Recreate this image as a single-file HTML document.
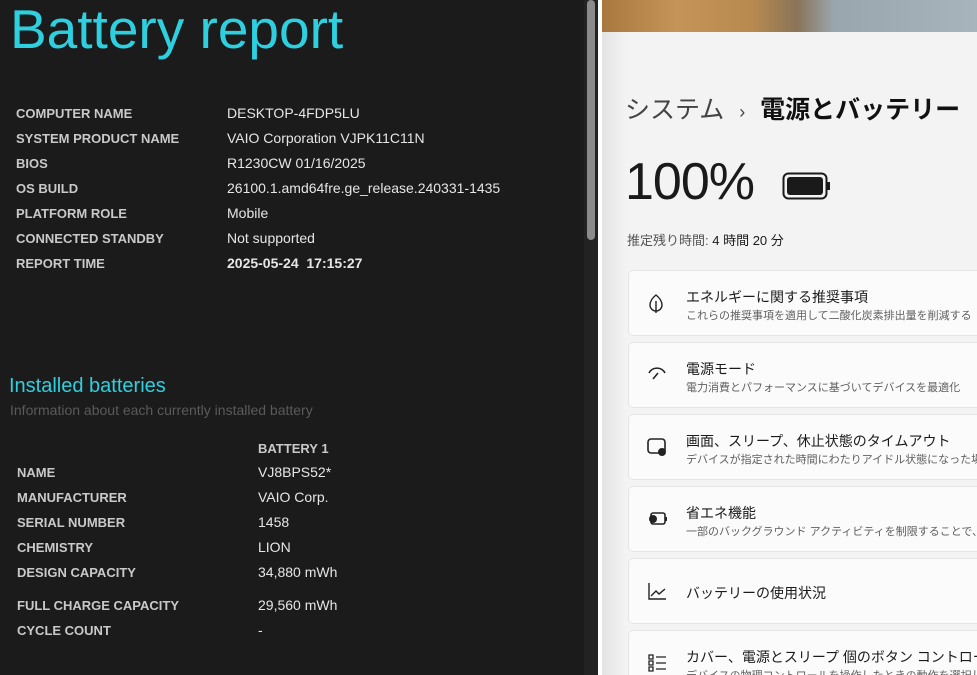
<!DOCTYPE html><html><head><meta charset="utf-8"><style>
*{margin:0;padding:0;box-sizing:border-box}
html,body{width:977px;height:675px;overflow:hidden}
body{position:relative;background:#f3f3f3;font-family:"Liberation Sans","Noto Sans CJK JP",sans-serif}
#L{position:absolute;left:0;top:0;width:584px;height:675px;background:#1b1b1b;color:#e6e6e6}
.t{position:absolute;left:10px;top:-3px;font-size:55px;color:#2ed0e0;font-family:"Liberation Sans",sans-serif;white-space:nowrap}
.r{position:absolute;font-size:14px;white-space:nowrap}
.k{position:absolute;font-size:13px;font-weight:bold;color:#c9c9c9;white-space:nowrap}
#sb{position:absolute;left:584px;top:0;width:14px;height:675px;background:#222}
#th{position:absolute;left:587px;top:0;width:8px;height:240px;background:#8b8b8b;border-radius:4px}
#sp{position:absolute;left:598px;top:0;width:4px;height:675px;background:#fff}
#img{position:absolute;left:602px;top:0;width:375px;height:32px;background:linear-gradient(90deg,#a8783f 0%,#c49458 20%,#b88a50 40%,#8a7458 52%,#9aa6ae 62%,#a8b4bc 100%)}
#sh{position:absolute;left:602px;top:32px;width:24px;height:643px;background:linear-gradient(90deg,#e4e4e4,#f3f3f3)}
.c{position:absolute;left:628px;width:360px;height:66px;background:#fbfbfb;border:1px solid #e5e5e5;border-radius:5px;overflow:hidden}
.c .a{position:absolute;left:57px;top:16px;font-size:14px;color:#1a1a1a;white-space:nowrap}
.c .b{position:absolute;left:57px;top:36px;font-size:11px;color:#5f5f5f;white-space:nowrap}
.c svg{position:absolute;left:18px;top:22px}
</style></head><body>
<div id="L">
<div class="t">Battery report</div>
<div class="k" style="left:16px;top:106px">COMPUTER NAME</div><div class="r" style="left:227px;top:105px">DESKTOP-4FDP5LU</div>
<div class="k" style="left:16px;top:131px">SYSTEM PRODUCT NAME</div><div class="r" style="left:227px;top:130px">VAIO Corporation VJPK11C11N</div>
<div class="k" style="left:16px;top:156px">BIOS</div><div class="r" style="left:227px;top:155px">R1230CW 01/16/2025</div>
<div class="k" style="left:16px;top:181px">OS BUILD</div><div class="r" style="left:227px;top:180px">26100.1.amd64fre.ge_release.240331-1435</div>
<div class="k" style="left:16px;top:206px">PLATFORM ROLE</div><div class="r" style="left:227px;top:205px">Mobile</div>
<div class="k" style="left:16px;top:231px">CONNECTED STANDBY</div><div class="r" style="left:227px;top:230px">Not supported</div>
<div class="k" style="left:16px;top:256px">REPORT TIME</div><div class="r" style="left:227px;top:255px;font-weight:bold">2025-05-24&nbsp; 17:15:27</div>
<div style="position:absolute;left:9px;top:375px;font-size:20px;color:#2ed0e0">Installed batteries</div>
<div style="position:absolute;left:10px;top:402px;font-size:14px;color:#5a5a5a">Information about each currently installed battery</div>
<div class="k" style="left:258px;top:441px">BATTERY 1</div>
<div class="k" style="left:17px;top:465px">NAME</div><div class="r" style="left:258px;top:464px">VJ8BPS52*</div>
<div class="k" style="left:17px;top:490px">MANUFACTURER</div><div class="r" style="left:258px;top:489px">VAIO Corp.</div>
<div class="k" style="left:17px;top:515px">SERIAL NUMBER</div><div class="r" style="left:258px;top:514px">1458</div>
<div class="k" style="left:17px;top:540px">CHEMISTRY</div><div class="r" style="left:258px;top:539px">LION</div>
<div class="k" style="left:17px;top:565px">DESIGN CAPACITY</div><div class="r" style="left:258px;top:564px">34,880 mWh</div>
<div class="k" style="left:17px;top:598px">FULL CHARGE CAPACITY</div><div class="r" style="left:258px;top:597px">29,560 mWh</div>
<div class="k" style="left:17px;top:623px">CYCLE COUNT</div><div class="r" style="left:258px;top:622px">-</div>
</div>
<div id="sb"></div><div id="th"></div><div id="sp"></div>
<div id="img"></div><div id="sh"></div>
<div style="position:absolute;left:625px;top:90px;font-size:25px;color:#444;white-space:nowrap">システム <span style="font-size:18px;margin:0 8px">›</span> <span style="color:#111;font-weight:bold">電源とバッテリー</span></div>
<div style="position:absolute;left:625px;top:152px;font-size:52px;color:#1a1a1a;letter-spacing:-1px">100%</div>
<svg style="position:absolute;left:782px;top:172px" width="50" height="28"><rect x="1.5" y="1.5" width="43" height="25" rx="5" fill="none" stroke="#1a1a1a" stroke-width="2"/><rect x="5" y="5" width="36" height="18" rx="3" fill="#1a1a1a"/><rect x="45" y="10" width="3" height="8" fill="#1a1a1a"/></svg>
<div style="position:absolute;left:627px;top:230px;font-size:13px;color:#555">推定残り時間: <span style="color:#1a1a1a">4 時間 20 分</span></div>
<div class="c" style="top:270px"><svg width="18" height="22"><path d="M9 2C4 6 3 9 3 12a6 6 0 0 0 12 0c0-3-1-6-6-10zM9 8v12" fill="none" stroke="#222" stroke-width="1.4"/></svg><div class="a">エネルギーに関する推奨事項</div><div class="b">これらの推奨事項を適用して二酸化炭素排出量を削減する</div></div>
<div class="c" style="top:342px"><svg width="20" height="20"><path d="M2 8a9 9 0 0 1 16 0M6 14l5-6" fill="none" stroke="#222" stroke-width="1.6"/></svg><div class="a">電源モード</div><div class="b">電力消費とパフォーマンスに基づいてデバイスを最適化</div></div>
<div class="c" style="top:414px"><svg width="20" height="20"><rect x="1" y="2" width="17" height="14" rx="3" fill="none" stroke="#222" stroke-width="1.6"/><circle cx="15" cy="15" r="4" fill="#222"/></svg><div class="a">画面、スリープ、休止状態のタイムアウト</div><div class="b">デバイスが指定された時間にわたりアイドル状態になった場合の</div></div>
<div class="c" style="top:486px"><svg width="22" height="20"><rect x="4" y="4" width="14" height="11" rx="2" fill="none" stroke="#222" stroke-width="1.6"/><rect x="18" y="8" width="2" height="4" fill="#222"/><circle cx="6" cy="10" r="4" fill="#222"/></svg><div class="a">省エネ機能</div><div class="b">一部のバックグラウンド アクティビティを制限することで、電力消費</div></div>
<div class="c" style="top:558px"><svg width="20" height="20"><path d="M2 2v16h17M4 15l5-5 3 3 6-5" fill="none" stroke="#222" stroke-width="1.4"/></svg><div class="a" style="top:24px">バッテリーの使用状況</div></div>
<div class="c" style="top:630px"><svg width="20" height="20"><path d="M2 2h4v4H2zM2 8h4v4H2zM2 14h4v4H2zM9 4h10M9 10h10M9 16h10" fill="none" stroke="#222" stroke-width="1.3"/></svg><div class="a">カバー、電源とスリープ 個のボタン コントロール</div><div class="b">デバイスの物理コントロールを操作したときの動作を選択します</div></div>
</body></html>
